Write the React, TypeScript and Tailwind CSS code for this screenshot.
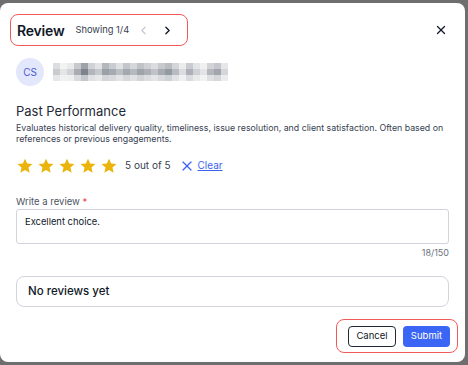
import React from 'react';
import { ChevronLeft, ChevronRight, X } from 'lucide-react';

// pixelated (redacted) name, columns of grey shades
const mosaic = [
  ['#dcdde0', '#c9cbcf', '#e6e7e9'],
  ['#f3f3f4', '#e4e5e7', '#f1f1f2'],
  ['#e9eaeb', '#d2d4d7', '#eeeff0'],
  ['#c7c9cd', '#a9adb3', '#d9dbde'],
  ['#9ea3aa', '#7d838c', '#c4c7cb'],
  ['#d0d3d6', '#b2b6bb', '#dfe0e2'],
  ['#e2e3e5', '#c5c8cc', '#e7e8ea'],
  ['#b4b8bd', '#9aa0a7', '#d3d5d8'],
  ['#c9ccd0', '#a6abb1', '#d7d9dc'],
  ['#dfe1e3', '#bcc0c4', '#e3e4e6'],
  ['#c2c5ca', '#a4a9af', '#d6d8db'],
  ['#d5d7da', '#b6babf', '#e0e1e3'],
  ['#bfc3c8', '#9fa4ab', '#d2d4d7'],
  ['#cdd0d4', '#acb0b6', '#dcdde0'],
  ['#dadcdf', '#c0c3c8', '#e4e5e7'],
  ['#c6c9cd', '#a8acb2', '#d8dadd'],
  ['#b9bdc2', '#949aa1', '#cfd2d5'],
  ['#d3d5d8', '#b8bcc1', '#e1e2e4'],
  ['#ebeced', '#dadcdf', '#eff0f1'],
  ['#c8cbcf', '#aeb2b8', '#d9dbde'],
  ['#e3e4e6', '#cfd1d5', '#e9eaeb'],
  ['#f0f0f1', '#e3e4e6', '#f2f2f3'],
  ['#d1d3d7', '#b4b8bd', '#dfe0e2'],
  ['#c4c7cc', '#a1a6ad', '#d5d7da'],
  ['#e6e7e9', '#d4d6d9', '#ebeced'],
];

const Star = () => (
  <svg viewBox="0 0 24 24" className="w-[18px] h-[18px]">
    <path
      d="M12 2.2l2.9 6.6 7.1.6-5.4 4.7 1.6 7-6.2-3.7-6.2 3.7 1.6-7L2 9.4l7.1-.6z"
      fill="#ebb40c"
    />
  </svg>
);

export default function App() {
  return (
    <div className="w-[468px] h-[365px] bg-[#6e6e6e] pt-[3px] pr-[3px] pb-[3px] font-['Inter',sans-serif] overflow-hidden">
      <div className="h-full w-[465px] bg-white rounded-lg px-4 pt-[11px] flex flex-col text-[#111827]">
        {/* header */}
        <div className="flex items-center justify-between">
          <div className="flex items-center h-[32px] -ml-[6px] pl-[6px] pr-[13px] border-[1.5px] border-[#f15a5a] rounded-lg">
            <span className="text-[14px] font-semibold tracking-[-0.2px]">Review</span>
            <span className="ml-[11px] text-[9.3px] text-[#374151]">Showing 1/4</span>
            <ChevronLeft className="ml-[8px] w-[13px] h-[13px] text-[#c3c6cb]" strokeWidth={2} />
            <ChevronRight className="ml-[11px] w-[13px] h-[13px] text-[#111827]" strokeWidth={2.5} />
          </div>
          <X className="w-[14px] h-[14px] mr-[1px] text-[#111827]" strokeWidth={2.2} />
        </div>

        {/* reviewer */}
        <div className="mt-[12px] flex items-center">
          <div className="w-[28px] h-[28px] rounded-full bg-[#e3e7fb] flex items-center justify-center text-[10px] text-[#4a5bd4]">
            CS
          </div>
          <div className="ml-[9px] flex blur-[0.6px]">
            {mosaic.map((col, i) => (
              <div key={i} className="flex flex-col">
                {col.map((c, j) => (
                  <div key={j} className="w-[7px] h-[6px]" style={{ backgroundColor: c }} />
                ))}
              </div>
            ))}
          </div>
        </div>

        {/* criterion */}
        <div className="mt-[16px] text-[13px] text-[#1f2937]">Past Performance</div>
        <p className="mt-0 text-[8.8px] leading-[11px] text-[#374151]">
          Evaluates historical delivery quality, timeliness, issue resolution, and client satisfaction. Often based on
          references or previous engagements.
        </p>

        <div className="mt-[13px] flex items-center">
          <div className="flex gap-[3px]">
            <Star />
            <Star />
            <Star />
            <Star />
            <Star />
          </div>
          <span className="ml-[7px] text-[10px] text-[#374151]">5 out of 5</span>
          <X className="ml-[9px] w-[16px] h-[16px] text-[#3b63f0]" strokeWidth={1.8} />
          <span className="ml-[2px] text-[10px] text-[#3b63f0] underline">Clear</span>
        </div>

        {/* review input */}
        <label className="mt-[20px] text-[9.5px] text-[#4b5563]">
          Write a review <span className="text-[#ef4444]">*</span>
        </label>
        <div className="mt-0 h-[35px] border border-[#d1d5db] rounded-[3px] px-[8px] pt-[5px] text-[9.4px] text-[#111827]">
          Excellent choice.
        </div>
        <div className="mt-[2px] text-right text-[9px] text-[#6b7280]">18/150</div>

        <div className="mt-[17px] h-[31px] border border-[#d1d5db] rounded-lg px-[11px] flex items-center text-[11.5px] font-medium text-[#111827]">
          No reviews yet
        </div>

        {/* actions */}
        <div className="mt-[12px] flex justify-end -mr-[9px]">
          <div className="flex items-center gap-[7px] h-[34px] pl-[11px] pr-[7px] border-[1.5px] border-[#f15a5a] rounded-lg">
            <button className="h-[21px] w-[48px] border border-[#1f2937] rounded-[4px] text-[9.5px] text-[#111827] bg-white">
              Cancel
            </button>
            <button className="h-[21px] w-[47px] rounded-[4px] text-[9.5px] text-white bg-[#3b65f5]">
              Submit
            </button>
          </div>
        </div>
      </div>
    </div>
  );
}
